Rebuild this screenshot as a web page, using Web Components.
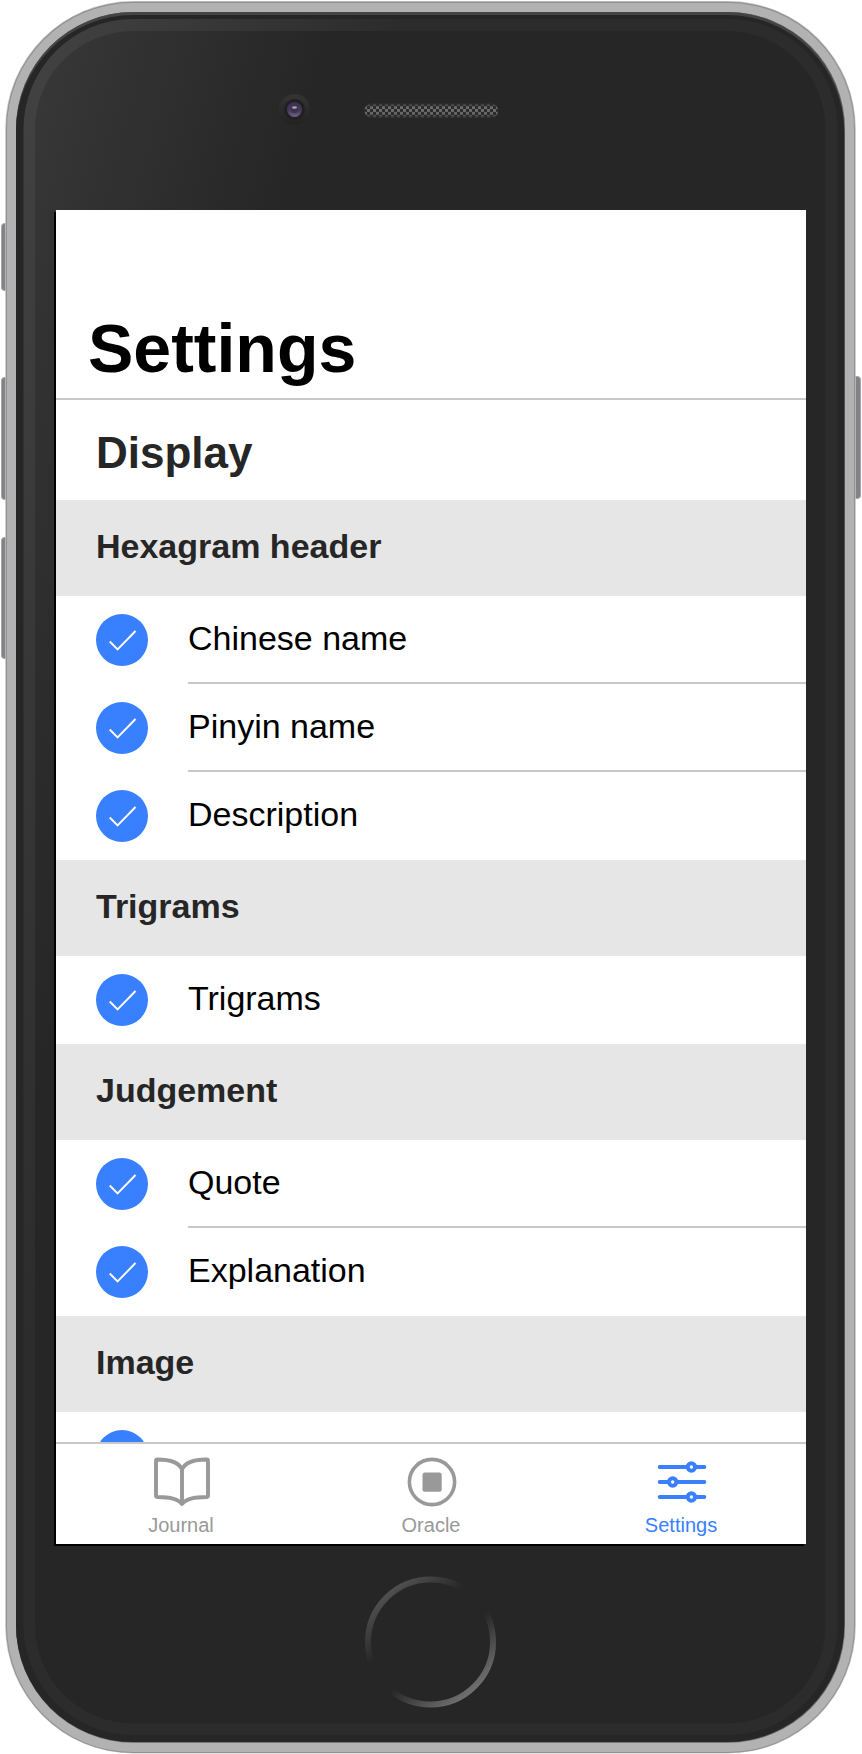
<!DOCTYPE html>
<html lang="en">
<head>
<meta charset="utf-8">
<title>Settings</title>
<style>
html,body{margin:0;background:#fff}
body{width:862px;height:1754px;overflow:hidden;font-family:"Liberation Sans",Arial,sans-serif}
</style>
</head>
<body>
<phone-frame>
  <settings-screen>
    <page-title slot="header">Settings</page-title>
    <list-heading>Display</list-heading>
    <list-divider>Hexagram header</list-divider>
    <check-item>Chinese name</check-item>
    <check-item>Pinyin name</check-item>
    <check-item last>Description</check-item>
    <list-divider>Trigrams</list-divider>
    <check-item last>Trigrams</check-item>
    <list-divider>Judgement</list-divider>
    <check-item>Quote</check-item>
    <check-item last>Explanation</check-item>
    <list-divider>Image</list-divider>
    <check-item></check-item>
    <tab-bar slot="footer">
      <tab-button icon="book">Journal</tab-button>
      <tab-button icon="oracle">Oracle</tab-button>
      <tab-button icon="sliders" active>Settings</tab-button>
    </tab-bar>
  </settings-screen>
</phone-frame>
<script>
function define(name, html) {
  const template = document.createElement('template');
  template.innerHTML = html;
  customElements.define(name, class extends HTMLElement {
    constructor() {
      super();
      this.attachShadow({mode: 'open'}).append(template.content.cloneNode(true));
    }
  });
}

define('phone-frame', `
<style>
:host{display:block;position:relative;box-sizing:border-box;width:862px;height:1754px;padding:210px 56px}
svg{position:absolute;left:0;top:0;width:862px;height:1754px}
</style>
<svg viewBox="0 0 862 1754" aria-hidden="true">
  <defs>
    <linearGradient id="face" gradientUnits="userSpaceOnUse" x1="20" y1="20" x2="310" y2="100"><stop offset="0" stop-color="#393939"/><stop offset="1" stop-color="#262626"/></linearGradient>
    <linearGradient id="rim" gradientUnits="userSpaceOnUse" x1="20" y1="20" x2="370" y2="117"><stop offset="0" stop-color="#434343"/><stop offset="1" stop-color="#2c2c2c"/></linearGradient>
    <linearGradient id="ring" gradientUnits="userSpaceOnUse" x1="388.8" y1="1591.5" x2="471.8" y2="1692.5"><stop offset="0" stop-color="#505050"/><stop offset=".34" stop-color="#262626"/><stop offset=".6" stop-color="#262626"/><stop offset="1" stop-color="#707070"/></linearGradient>
    <linearGradient id="cam" x1="0" y1="0" x2="0" y2="1"><stop offset="0" stop-color="#343434"/><stop offset="1" stop-color="#222"/></linearGradient>
    <linearGradient id="lens" x1="0" y1="0" x2="0" y2="1"><stop offset="0" stop-color="#3b2e50"/><stop offset=".6" stop-color="#463a5e"/><stop offset="1" stop-color="#716488"/></linearGradient>
    <linearGradient id="grille" x1="0" y1="0" x2="0" y2="1"><stop offset="0" stop-color="#333"/><stop offset=".3" stop-color="#707070"/><stop offset=".7" stop-color="#646464"/><stop offset="1" stop-color="#303030"/></linearGradient>
    <pattern id="mesh" width="6" height="6" patternUnits="userSpaceOnUse" x="364" y="103"><path d="M0 0h3v3H0zM3 3h3v3H3z" fill="#2c2c2c"/></pattern>
  </defs>
  <g fill="#828288" stroke="#a5a5a8" stroke-width="1">
    <rect x="1.5" y="223.5" width="12" height="67" rx="3"/>
    <rect x="1.5" y="377.5" width="12" height="122" rx="3"/>
    <rect x="1.5" y="537.5" width="12" height="121" rx="3"/>
    <rect x="848.5" y="376.500" width="12" height="122" rx="3"/>
  </g>
  <rect x="5.2" y="1" width="850.6" height="1752.500" rx="128" fill="#c2c2c2"/>
  <rect x="6" y="1.700" width="849" height="1751.200" rx="127" fill="#929292"/>
  <rect x="7" y="3" width="847" height="1749" rx="126" fill="#b2b2b2"/>
  <rect x="16" y="12" width="829" height="1730.700" rx="117" fill="#666"/>
  <rect x="16" y="12" width="828.200" height="1730" rx="117" fill="#444"/>
  <rect x="16" y="15" width="828.200" height="1727" rx="117" fill="#262626"/>
  <rect x="23.500" y="19" width="814" height="1716" rx="110" fill="url(#rim)"/>
  <rect x="35" y="31" width="790.500" height="1692.500" rx="98" fill="url(#face)"/>
  <circle cx="294.500" cy="109.500" r="15.500" fill="url(#cam)"/>
  <circle cx="294.500" cy="109.500" r="10.500" fill="#202022"/>
  <circle cx="294.500" cy="109.500" r="7.500" fill="url(#lens)"/>
  <circle cx="294.500" cy="109.500" r="3.500" fill="#3c3447"/>
  <ellipse cx="294.500" cy="107.500" rx="2.500" ry="1.300" fill="#aaa4b4"/>
  <rect x="364.500" y="103.500" width="133.500" height="14.500" rx="7.200" fill="url(#grille)"/>
  <rect x="364" y="103" width="134" height="15" rx="7.500" fill="url(#mesh)"/>
  <circle cx="430.500" cy="1642" r="62.500" fill="none" stroke="url(#ring)" stroke-width="6"/>
  <rect x="54" y="212" width="750" height="1334" fill="#000"/>
</svg>
<slot></slot>`);

define('settings-screen', `
<style>
:host{position:relative;display:flex;flex-direction:column;width:750px;height:1334px;background:#fff;overflow:hidden}
main{flex:1;min-height:0;overflow:hidden}
</style>
<slot name="header"></slot><main><slot></slot></main><slot name="footer"></slot>`);

define('page-title', `
<style>
:host{display:flex;align-items:flex-end;flex:none;box-sizing:border-box;height:190px;padding:0 32px 11px;border-bottom:2px solid #c8c8c8}
h1{margin:0;font-size:68px;line-height:78px;font-weight:700;color:#000}
</style>
<h1><slot></slot></h1>`);

define('list-heading', `
<style>
:host{display:flex;align-items:center;box-sizing:border-box;height:100px;padding:6px 40px 0}
h2{margin:0;font-size:44px;line-height:50px;color:#262626}
</style>
<h2><slot></slot></h2>`);

define('list-divider', `
<style>
:host{display:flex;align-items:center;box-sizing:border-box;height:96px;padding:0 40px 4px;background:#e6e6e6}
h3{margin:0;font-size:34px;line-height:40px;color:#262626}
</style>
<h3><slot></slot></h3>`);

define('check-item', `
<style>
:host{display:flex;height:88px;padding-left:40px}
svg{flex:none;width:52px;height:52px;margin:18px 40px 0 0}
div{flex:1;box-sizing:border-box;height:88px;border-bottom:2px solid #c8c7cc;font-size:34px;line-height:84px;color:#000}
:host([last]) div{border-color:transparent}
</style>
<svg viewBox="0 0 52 52"><circle cx="26" cy="26" r="26" fill="#3880ff"/><path d="M13.700 27.500 21.600 35.500 39.500 17" fill="none" stroke="#fff" stroke-width="1.900"/></svg>
<div><slot></slot></div>`);

define('tab-bar', `
<style>:host{display:flex;flex:none;height:100px;border-top:2px solid #c8c8c8;background:#fff}</style>
<slot></slot>`);

const icons = {
  book: '<path d="M30 15.500C27 8.500 18 5.500 5.500 5.500Q4 5.500 4 7V41.500Q4 43 5.500 43C17 43 26 44.500 30 50C34 44.500 43 43 54.500 43Q56 43 56 41.500V7Q56 5.500 54.500 5.500C42 5.500 33 8.500 30 15.500ZM30 15V49" fill="none" stroke="currentColor" stroke-width="3.900" stroke-linejoin="round"/>',
  oracle: '<circle cx="30" cy="28" r="22.600" fill="none" stroke="currentColor" stroke-width="3.600"/><rect x="20.500" y="18.500" width="19.200" height="19.200" rx="2.500" fill="currentColor"/>',
  sliders: '<g fill="none" stroke="currentColor" stroke-width="4" stroke-linecap="round"><path d="M7.700 13H52.300M7.700 28H52.300M7.700 43H52.300"/><g fill="#fff"><circle cx="39.400" cy="13" r="3.700"/><circle cx="20.700" cy="28" r="3.700"/><circle cx="39.400" cy="43" r="3.700"/></g></g>'
};
customElements.define('tab-button', class extends HTMLElement {
  constructor() {
    super();
    this.attachShadow({mode: 'open'}).innerHTML = `
<style>
:host{flex:1;display:flex;flex-direction:column;align-items:center;padding-top:10px;color:#999;font-size:20px;line-height:24px}
:host([active]){color:#3880ff}
svg{width:60px;height:58px;margin:0 0 1px 2px}
</style>
<svg viewBox="0 0 60 58">${icons[this.getAttribute('icon')]}</svg>
<span><slot></slot></span>`;
  }
});
</script>
</body>
</html>
